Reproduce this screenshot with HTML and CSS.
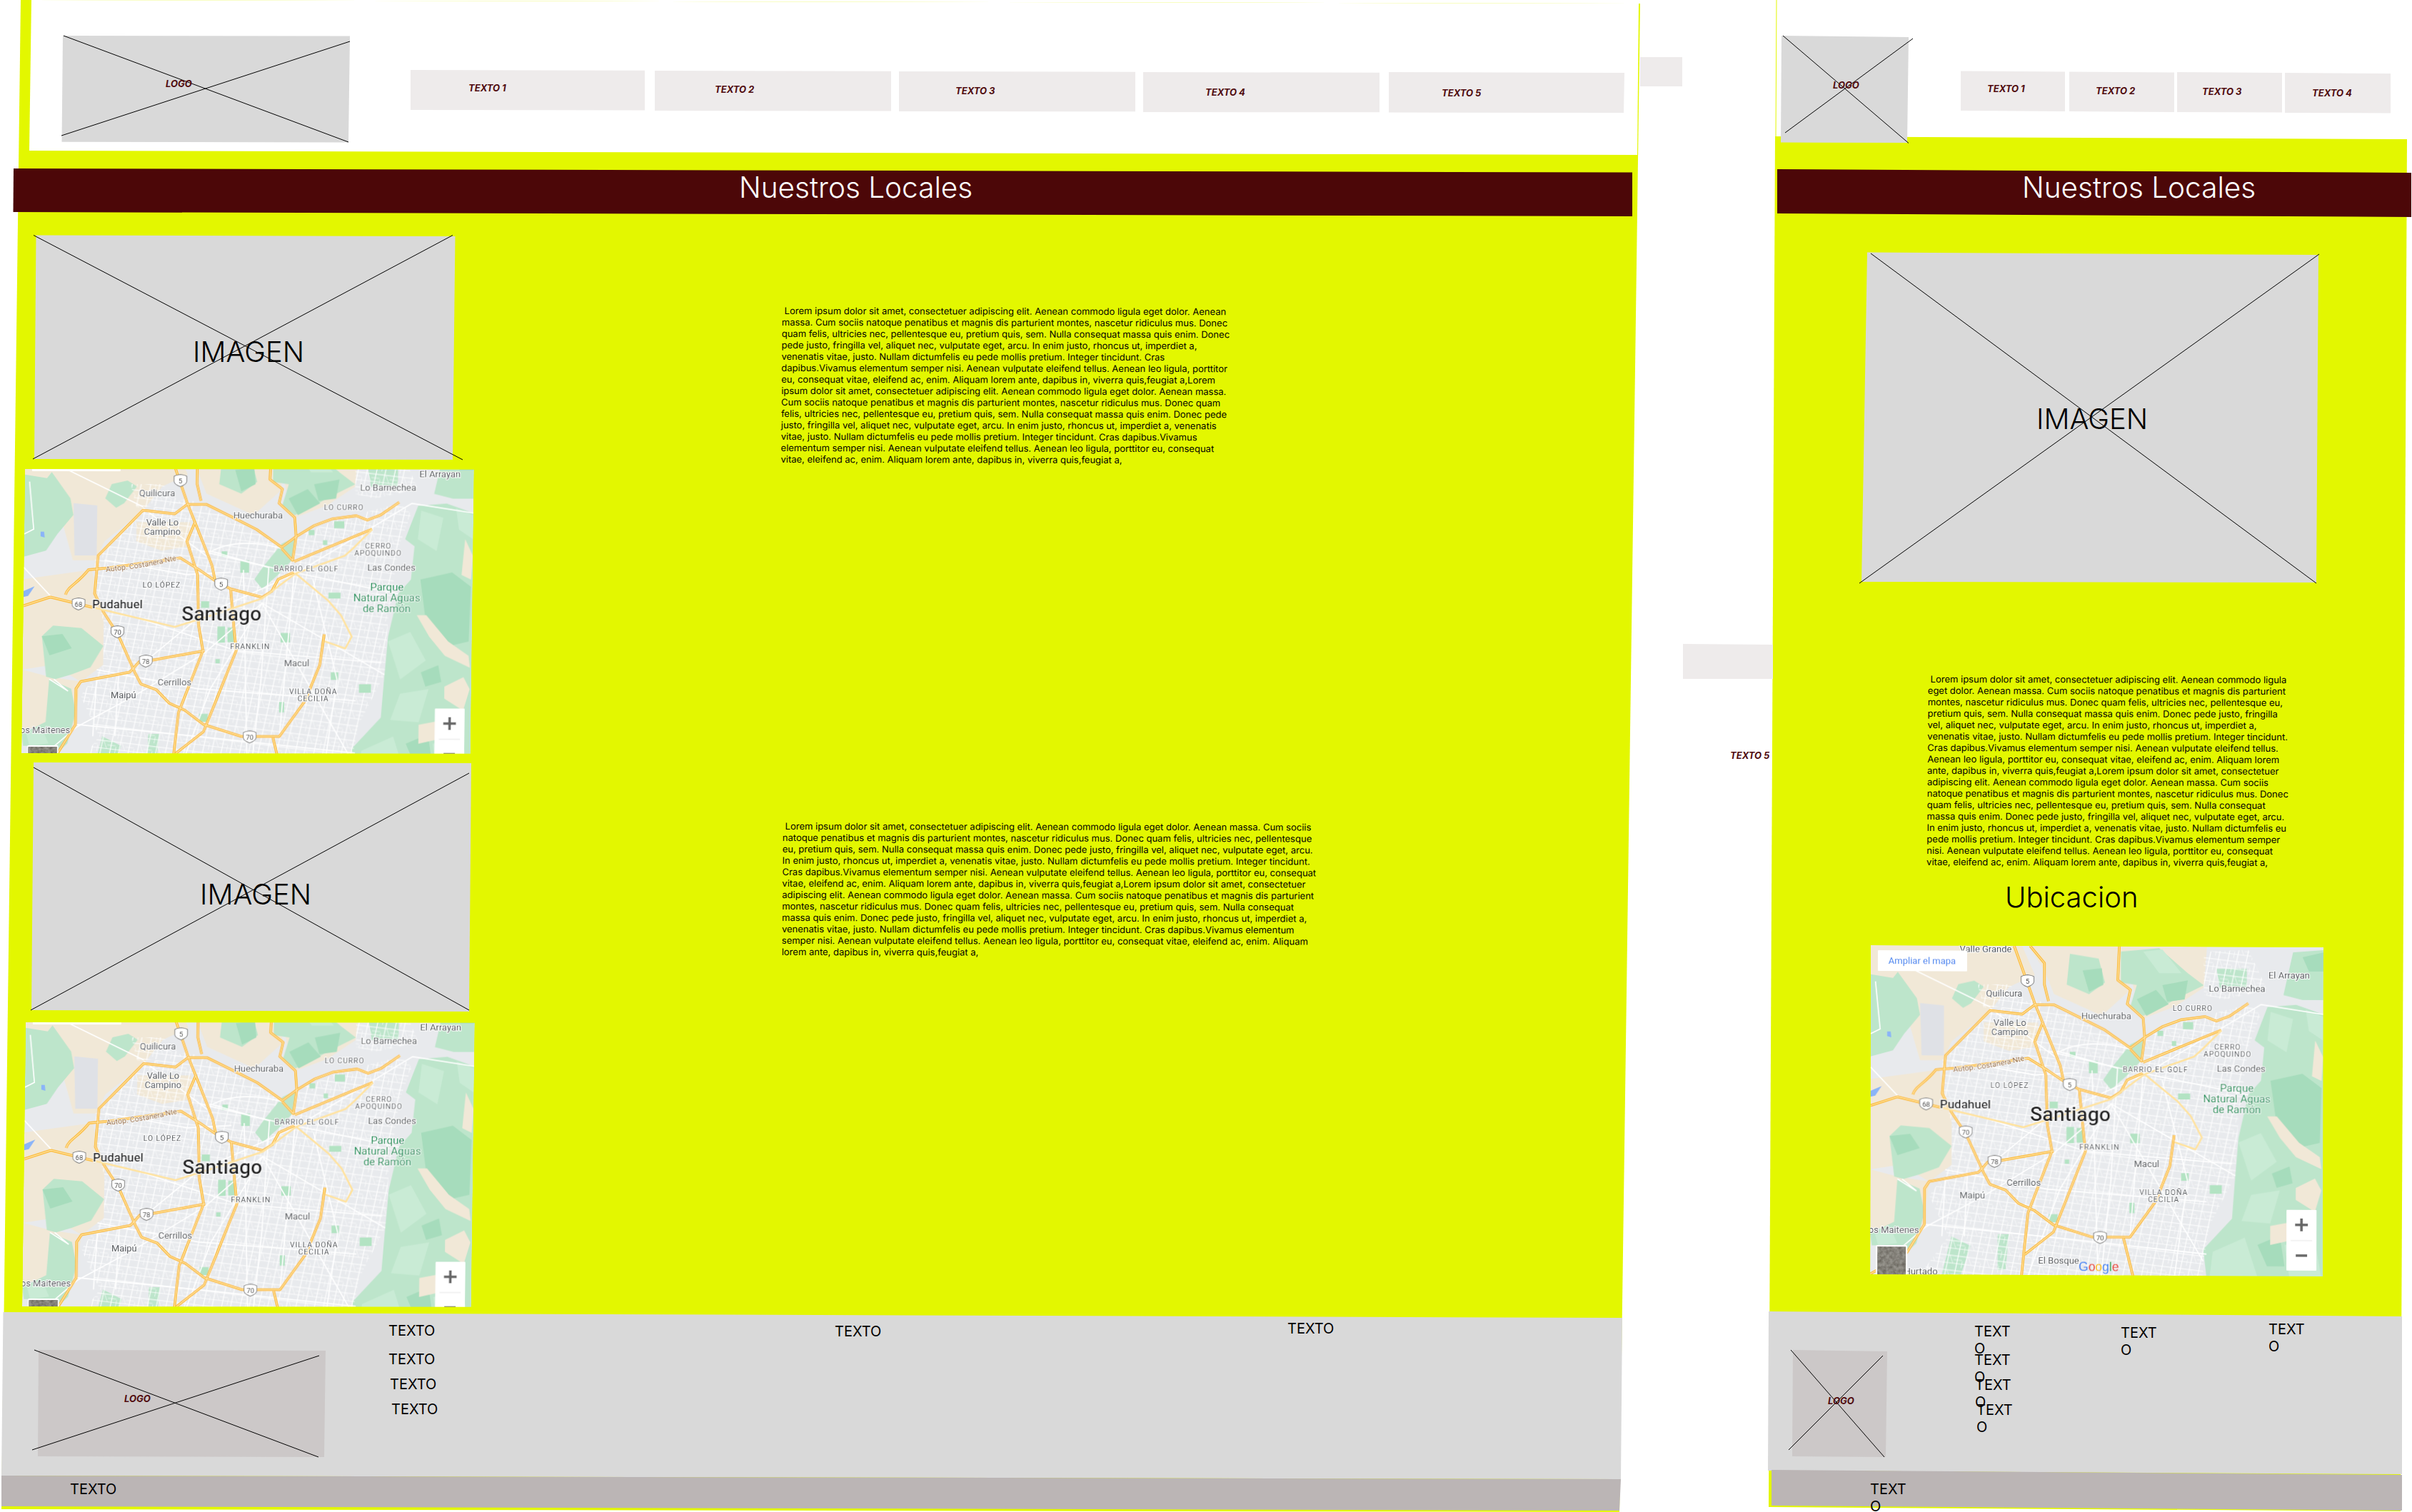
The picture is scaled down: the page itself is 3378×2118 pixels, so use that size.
FILE: index.html
```html
<!DOCTYPE html>
<html lang="es">
<head>
<meta charset="utf-8">
<title>Nuestros Locales</title>
<link rel="stylesheet" href="styles.css">
</head>
<body>
<main class="canvas">
<svg class="shapes" width="3378" height="2118" viewBox="0 0 3378 2118" xmlns="http://www.w3.org/2000/svg">
  <defs>
    <clipPath id="cropWide"><rect x="0" y="0" width="634" height="398"/></clipPath>
    <clipPath id="mapFrame"><rect x="0" y="0" width="634" height="461"/></clipPath>
    <pattern id="streets" width="58" height="62" patternUnits="userSpaceOnUse" patternTransform="rotate(9)">
      <path d="M0 14H58M0 46H58M12 0V62M40 0V62" stroke="#fff" stroke-width="2.6" fill="none"/>
      <path d="M0 30H26M28 62V34M44 14L58 46" stroke="#fff" stroke-width="1.6" fill="none"/>
    </pattern>
    <filter id="grain" x="0" y="0" width="100%" height="100%">
      <feTurbulence type="fractalNoise" baseFrequency=".22" numOctaves="3" seed="4"/>
      <feColorMatrix values="0 0 0 0 .30  0 0 0 0 .29  0 0 0 0 .26  1.6 0 0 0 -.1"/>
    </filter>
    <filter id="soft" x="0" y="0" width="100%" height="100%">
      <feGaussianBlur stdDeviation=".45"/>
    </filter>
    <g id="map" clip-path="url(#mapFrame)">
     <g filter="url(#soft)">
      <rect class="m-urban" width="634" height="461"/>
      <g transform="translate(-20.09 -26) scale(.4464 .3333)">
        <g class="m-beige">
          <path d="M45 78H520L560 200L480 250L420 350L300 480L270 560L200 560L130 240L45 230Z"/>
          <path d="M45 640L260 600L300 800L300 1000L230 1070L140 1000L45 1020Z"/>
          <path d="M45 1020L130 1050L230 1070L210 1250L45 1270Z"/>
          <path d="M540 78H830L860 260L770 370L620 280L590 180Z"/>
          <path d="M830 78H1100L1090 250L1000 330L900 380Z"/>
          <path d="M400 400L570 400L570 500L480 520L400 480Z"/>
        </g>
        <g class="m-green">
          <path d="M45 545V200L115 215L130 190L190 300L200 370L150 450L115 520Z"/>
          <path d="M300 300L320 240L370 225L400 250L360 320L335 340Z"/>
          <path d="M105 880L140 835L230 845L300 920L260 1010L200 1040L150 1060L120 1050Z"/>
          <path d="M130 1060L200 1100L215 1200L190 1330L160 1370L100 1340L50 1340L45 1290L120 1240Z"/>
          <path d="M670 110L760 130L780 230L730 280L660 240Z"/>
          <path d="M830 100L950 85L1040 190L1090 240L1000 300L950 340L900 370L860 330L880 240L830 230Z"/>
          <path d="M1130 170L1225 170L1225 250L1140 250Z"/>
          <path d="M1290 330L1380 320L1465 360V1465H1100L1090 1350L1180 1220L1190 1040L1200 880L1230 700L1270 640L1280 500L1250 470Z"/>
          <path d="M1370 100L1465 90V300H1400L1340 280Z"/>
          <path d="M300 1300L360 1340L330 1460H270Z"/>
          <path d="M445 1290L480 1290L470 1440H445Z"/>
        </g>
        <g class="m-light">
          <path d="M1300 350L1370 380L1350 520L1290 470Z"/>
          <path d="M1200 900L1270 860L1320 980L1240 1060Z"/>
          <path d="M1240 1120L1330 1100L1300 1240L1210 1230Z"/>
          <path d="M1120 1360L1220 1300L1260 1465H1110Z"/>
          <path d="M1345 1330L1440 1310L1460 1465H1360Z"/>
          <path d="M1410 340L1465 370V470L1420 430Z"/>
          <path d="M60 1290L110 1270L130 1330L70 1340Z"/>
          <path d="M900 100L960 90L1020 190L950 190Z"/>
        </g>
        <g class="m-dark">
          <path d="M1300 640L1400 610L1460 670L1455 900L1390 920L1320 830Z"/>
          <path d="M880 300L940 260L980 320L910 370Z"/>
          <path d="M1260 1330L1330 1290L1345 1420L1290 1420Z"/>
          <path d="M105 880L170 870L200 930L130 960Z"/>
          <path d="M1305 1030L1360 1000L1370 1070L1320 1090Z"/>
          <path d="M960 240L1040 220L1030 300L975 310Z"/>
          <path d="M1400 120L1465 100V180L1420 180Z"/>
          <path d="M710 180L770 170L775 240L730 270Z"/>
        </g>
        <g class="m-beige">
          <path d="M1440 470L1465 540L1460 640L1430 620Z"/>
          <path d="M1290 790L1320 790L1390 900L1455 960L1460 1010L1380 960L1330 880Z"/>
          <path d="M1380 1090L1440 1050L1460 1100L1440 1190L1380 1140Z"/>
          <path d="M1300 1250L1380 1230L1400 1300L1300 1330Z"/>
        </g>
        <path class="m-port" d="M200 320L275 330V540L205 540Z"/>
        <path class="m-water" d="M97 440H108L110 465L97 460Z"/>
        <path class="m-water" d="M45 690L80 670L60 710L45 715Z"/>
        <path class="m-grid" d="M270 560L285 530L420 350L560 300L720 400L860 500L905 460L1030 390L1230 320L1270 360L1230 500L1200 800L1190 1040L1110 1250L1090 1400V1465H200L290 1300L230 1130L300 1000L300 820L270 700Z"/>
        <path class="m-grid" d="M380 240L480 240L540 320L400 340Z"/>
        <path class="m-grid" d="M1090 100L1230 90L1290 260L1150 300L1090 280Z"/>
        <path class="m-green" d="M860 490L905 460L900 550L850 620L800 680L775 640L800 590Z"/>
        <g class="m-park">
          <rect x="660" y="838" width="24" height="68"/>
          <rect x="692" y="842" width="20" height="62"/>
          <rect x="860" y="865" width="30" height="40"/>
          <rect x="730" y="560" width="28" height="52"/>
          <rect x="607" y="732" width="26" height="28"/>
          <rect x="1010" y="695" width="38" height="25"/>
          <rect x="1020" y="1030" width="24" height="32"/>
          <rect x="605" y="1205" width="28" height="34"/>
          <rect x="1110" y="1080" width="38" height="36"/>
          <rect x="1025" y="395" width="32" height="30"/>
          <rect x="945" y="432" width="18" height="22"/>
          <rect x="990" y="475" width="14" height="20"/>
          <rect x="670" y="522" width="18" height="24"/>
          <rect x="858" y="1155" width="16" height="44"/>
          <rect x="655" y="975" width="14" height="18"/>
        </g>
        <g class="m-road">
          <path d="M45 590L130 710M180 180L420 335M60 230L75 430L45 450"/>
          <path d="M130 1060L190 1110L145 1060M45 1460L220 1260L400 1130L620 950L800 740"/>
          <path d="M420 1000L600 800L905 615L1270 320L1465 360"/>
          <path d="M280 1020L600 1100L1100 1150M400 800L720 940L1180 990M600 520L860 600L1230 700"/>
          <path d="M630 520L820 590L800 1060L770 1465M960 640L1040 1060L1000 1465M740 600L760 1465"/>
          <path d="M800 740L1190 1040M800 740L640 1100L540 1465M800 740L1090 1400M900 620L860 1300"/>
          <path d="M280 1060L270 1300M350 1030L340 1300M215 1250L600 1300L1100 1370"/>
          <path d="M640 520C700 480 780 480 860 510M420 340L640 560M300 560L560 620L700 610"/>
        </g>
        <g class="m-hwy">
          <path id="hwa" d="M560 325L520 365L420 350L280 540L270 700L300 780L345 870L400 1030L420 1080L470 1105L510 1160L560 1190L620 1250L740 1300L860 1300L940 1150L985 1000L998 870M560 325H620L720 390L780 430L860 505L905 460L960 415L1020 385L1095 372L1130 390L1170 370L1230 315"/>
          <path id="hwb" d="M495 78L560 320L640 580L650 640M545 78L590 150L590 240L603 310M585 400L560 480L595 620L600 830L615 940L540 1200L520 1465M700 680L715 880L720 940L620 1280L530 1375M825 78L820 220L860 260L850 320L900 380L905 460L895 560L860 510"/>
          <path id="hwc" d="M178 705C185 670 215 660 250 600L310 593L540 550L600 600L650 645L700 680L800 715L830 690L850 640L900 610M900 565L1145 428M45 752L130 715L270 760M620 940L455 980L415 985L385 1030L230 1070L215 1100L215 1250L160 1370L45 1460M840 1305L870 1465"/>
        </g>
        <g class="m-hwy-inner">
          <use href="#hwa"/><use href="#hwb"/><use href="#hwc"/>
        </g>
        <g class="m-ramp">
          <path d="M270 760L525 840L620 800L800 720L905 615L1060 540L1085 510L1145 430"/>
          <path d="M905 615L1010 730L1050 790L1085 880L1065 930L1000 900"/>
        </g>
      </g>
      <g class="m-label">
        <text x="161" y="9">Valle Grande</text>
        <text x="187" y="71">Quilicura</text>
        <text x="330" y="102">Huechuraba</text>
        <text x="513" y="63">Lo Barnechea</text>
        <text x="586" y="44">El Arrayan</text>
        <text x="195" y="112">Valle Lo</text>
        <text x="195" y="125">Campino</text>
        <text x="519" y="175">Las Condes</text>
        <text x="387" y="309">Macul</text>
        <text x="215" y="336">Cerrillos</text>
        <text x="143" y="354">Maipú</text>
        <text x="33" y="403">os Maitenes</text>
        <text x="264" y="445">El Bosque</text>
        <text x="71" y="461">Hurtado</text>
      </g>
      <g class="m-label m-caps">
        <text x="451" y="90">LO CURRO</text>
        <text x="500" y="144">CERRO</text>
        <text x="500" y="154">APOQUINDO</text>
        <text x="399" y="176">BARRIO EL GOLF</text>
        <text x="195" y="199">LO LÓPEZ</text>
        <text x="321" y="285">FRANKLIN</text>
        <text x="411" y="348">VILLA DOÑA</text>
        <text x="411" y="358">CECILIA</text>
      </g>
      <g class="m-label m-green-text">
        <text x="513" y="203">Parque</text>
        <text x="513" y="218">Natural Aguas</text>
        <text x="513" y="233">de Ramón</text>
      </g>
      <path id="costanera" class="m-none" d="M116 177Q170 172 218 160"/>
      <text class="m-road-name"><textPath href="#costanera">Autop. Costanera Nte.</textPath></text>
      <text class="m-pudahuel" x="133" y="228">Pudahuel</text>
      <text class="m-santiago" x="280" y="245">Santiago</text>
      <g class="m-shield">
        <g transform="translate(219.6 49)"><path d="M-9-6C-6-8-3-8 0-8.5C3-8 6-8 9-6V1C9 5 4 7 0 8.5C-4 7-9 5-9 1Z"/><text y="3.5">5</text></g>
        <g transform="translate(279 194)"><path d="M-9-6C-6-8-3-8 0-8.5C3-8 6-8 9-6V1C9 5 4 7 0 8.5C-4 7-9 5-9 1Z"/><text y="3.5">5</text></g>
        <g transform="translate(78 222)"><path d="M-9-6C-6-8-3-8 0-8.5C3-8 6-8 9-6V1C9 5 4 7 0 8.5C-4 7-9 5-9 1Z"/><text y="3.5">68</text></g>
        <g transform="translate(133.5 261)"><path d="M-9-6C-6-8-3-8 0-8.5C3-8 6-8 9-6V1C9 5 4 7 0 8.5C-4 7-9 5-9 1Z"/><text y="3.5">70</text></g>
        <g transform="translate(174 302)"><path d="M-9-6C-6-8-3-8 0-8.5C3-8 6-8 9-6V1C9 5 4 7 0 8.5C-4 7-9 5-9 1Z"/><text y="3.5">78</text></g>
        <g transform="translate(322 408)"><path d="M-9-6C-6-8-3-8 0-8.5C3-8 6-8 9-6V1C9 5 4 7 0 8.5C-4 7-9 5-9 1Z"/><text y="3.5">70</text></g>
      </g>
      <rect class="m-card" x="10" y="7" width="125" height="29" rx="1"/>
      <text class="m-expand" x="72" y="26">Ampliar el mapa</text>
      <rect class="m-card" x="583" y="368" width="42" height="85" rx="1"/>
      <path class="m-sep" d="M589 411H619"/>
      <path class="m-zoom" d="M604 380V398M595 389H613M596 432H612"/>
      <rect class="m-card" x="8" y="420" width="44" height="45" rx="2"/>
      <rect class="m-thumb" x="10" y="422" width="40" height="43"/>
      <rect x="10" y="422" width="40" height="43" filter="url(#grain)"/>
      <text class="m-google" x="292" y="455"><tspan class="g-b">G</tspan><tspan class="g-r">o</tspan><tspan class="g-y">o</tspan><tspan class="g-b">g</tspan><tspan class="g-g">l</tspan><tspan class="g-r">e</tspan></text>
     </g>
    </g>
  </defs>

  <!-- Desktop artboard -->
  <polygon class="c-yellow" points="29,0 2297,5 2268,2118 2,2114"/>
  <polygon class="c-white" points="44,0 2295,5 2293,217 41,211"/>
  <polygon class="c-grey" points="88,50 490,50.5 488,199.5 86.5,198.7"/>
  <polyline class="c-line" points="89,50 488,199"/>
  <polyline class="c-line" points="490,58 86,190"/>
  <polygon class="c-nav" points="575,98 903,98.7 903,154.5 575,154"/>
  <polygon class="c-nav" points="917,99 1248,99.7 1248,155.5 917,155"/>
  <polygon class="c-nav" points="1259,100 1590,100.7 1590,156.3 1259,156"/>
  <polygon class="c-nav" points="1601,101 1932,101.7 1932,157.3 1601,157"/>
  <polygon class="c-nav" points="1945,101 2275,102 2274,158 1945,157.5"/>
  <polygon class="c-nav" points="2297,80 2356,80 2356,121 2297,121"/>
  <polygon class="c-maroon" points="19,236 2286,241.5 2286,303 18.5,297"/>
  <polygon class="c-grey" points="50.5,329.5 637.5,331 634,644 48,643"/>
  <polyline class="c-line" points="47,329.5 648,644"/>
  <polyline class="c-line" points="634,329.5 46,643"/>
  <g transform="matrix(.992 .001 -.0126 1 35 657)"><g clip-path="url(#cropWide)"><use href="#map" y="-33"/></g></g>
  <polygon class="c-grey" points="47,1068 660,1069 657,1417 44,1415"/>
  <polyline class="c-line" points="47,1075 657,1415"/>
  <polyline class="c-line" points="657,1083 43,1415"/>
  <g transform="matrix(.992 .001 -.0126 1 36 1432)"><g clip-path="url(#cropWide)"><use href="#map" y="-33"/></g></g>
  <polygon class="c-grey" points="4.5,1838 2272,1846 2270,2072 2,2067"/>
  <polygon class="c-taupe" points="2,2067 2270,2072 2268,2116 2,2110"/>
  <polygon class="c-logo" points="54,1891 456,1892 454,2041 53,2040"/>
  <polyline class="c-line" points="48,1891 446,2041"/>
  <polyline class="c-line" points="447,1899 45,2031"/>

  <!-- Mobile artboard -->
  <polygon class="c-yellow" points="2486,191 3371,195 3362,2117 2477,2111"/>
  <polyline class="c-hair" points="2488,0 2487,191"/>
  <polygon class="c-grey" points="2495,50 2673,52 2671,200 2494,199.5"/>
  <polyline class="c-line" points="2497,50 2673,200.5"/>
  <polyline class="c-line" points="2679,54 2500,186"/>
  <polygon class="c-nav" points="2746,99.5 2892,100.5 2892,156 2746,155"/>
  <polygon class="c-nav" points="2898,100.5 3045,101.5 3045,157 2898,156"/>
  <polygon class="c-nav" points="3049,101 3196,102 3196,157.6 3049,157"/>
  <polygon class="c-nav" points="3200,102 3348,103 3348,158.5 3200,158"/>
  <polygon class="c-nav" points="2357,902 2483,903 2483,951 2357,951"/>
  <polygon class="c-maroon" points="2489,237 3377,242 3377,304 2489,299"/>
  <polygon class="c-grey" points="2615,353.6 3247,357 3244,816 2607,815"/>
  <polyline class="c-line" points="2620,355 3244,817"/>
  <polyline class="c-line" points="3248,356 2604,817"/>
  <g transform="matrix(1 .0047 -.002 1 2620 1324)"><use href="#map"/></g>
  <polygon class="c-grey" points="2477,1837 3364,1844 3364,2065 2476,2060"/>
  <polygon class="c-taupe" points="2481,2059 3364,2066 3364,2116 2481,2109"/>
  <polygon class="c-logo" points="2511,1891 2643,1893 2641,2041 2510,2040"/>
  <polyline class="c-line" points="2508,1891 2639,2041"/>
  <polyline class="c-line" points="2637,1899 2505,2031"/>
</svg>

<span class="tag d-logo">LOGO</span>
<span class="tag d-t1">TEXTO 1</span>
<span class="tag d-t2">TEXTO 2</span>
<span class="tag d-t3">TEXTO 3</span>
<span class="tag d-t4">TEXTO 4</span>
<span class="tag d-t5">TEXTO 5</span>
<h1 class="title d-title">Nuestros Locales</h1>
<span class="big d-img1">IMAGEN</span>
<span class="big d-img2">IMAGEN</span>
<p class="para d-p1">&nbsp;Lorem ipsum dolor sit amet, consectetuer adipiscing elit. Aenean commodo ligula eget dolor. Aenean<br>massa. Cum sociis natoque penatibus et magnis dis parturient montes, nascetur ridiculus mus. Donec<br>quam felis, ultricies nec, pellentesque eu, pretium quis, sem. Nulla consequat massa quis enim. Donec<br>pede justo, fringilla vel, aliquet nec, vulputate eget, arcu. In enim justo, rhoncus ut, imperdiet a,<br>venenatis vitae, justo. Nullam dictumfelis eu pede mollis pretium. Integer tincidunt. Cras<br>dapibus.Vivamus elementum semper nisi. Aenean vulputate eleifend tellus. Aenean leo ligula, porttitor<br>eu, consequat vitae, eleifend ac, enim. Aliquam lorem ante, dapibus in, viverra quis,feugiat a,Lorem<br>ipsum dolor sit amet, consectetuer adipiscing elit. Aenean commodo ligula eget dolor. Aenean massa.<br>Cum sociis natoque penatibus et magnis dis parturient montes, nascetur ridiculus mus. Donec quam<br>felis, ultricies nec, pellentesque eu, pretium quis, sem. Nulla consequat massa quis enim. Donec pede<br>justo, fringilla vel, aliquet nec, vulputate eget, arcu. In enim justo, rhoncus ut, imperdiet a, venenatis<br>vitae, justo. Nullam dictumfelis eu pede mollis pretium. Integer tincidunt. Cras dapibus.Vivamus<br>elementum semper nisi. Aenean vulputate eleifend tellus. Aenean leo ligula, porttitor eu, consequat<br>vitae, eleifend ac, enim. Aliquam lorem ante, dapibus in, viverra quis,feugiat a,</p>
<p class="para d-p2">&nbsp;Lorem ipsum dolor sit amet, consectetuer adipiscing elit. Aenean commodo ligula eget dolor. Aenean massa. Cum sociis<br>natoque penatibus et magnis dis parturient montes, nascetur ridiculus mus. Donec quam felis, ultricies nec, pellentesque<br>eu, pretium quis, sem. Nulla consequat massa quis enim. Donec pede justo, fringilla vel, aliquet nec, vulputate eget, arcu.<br>In enim justo, rhoncus ut, imperdiet a, venenatis vitae, justo. Nullam dictumfelis eu pede mollis pretium. Integer tincidunt.<br>Cras dapibus.Vivamus elementum semper nisi. Aenean vulputate eleifend tellus. Aenean leo ligula, porttitor eu, consequat<br>vitae, eleifend ac, enim. Aliquam lorem ante, dapibus in, viverra quis,feugiat a,Lorem ipsum dolor sit amet, consectetuer<br>adipiscing elit. Aenean commodo ligula eget dolor. Aenean massa. Cum sociis natoque penatibus et magnis dis parturient<br>montes, nascetur ridiculus mus. Donec quam felis, ultricies nec, pellentesque eu, pretium quis, sem. Nulla consequat<br>massa quis enim. Donec pede justo, fringilla vel, aliquet nec, vulputate eget, arcu. In enim justo, rhoncus ut, imperdiet a,<br>venenatis vitae, justo. Nullam dictumfelis eu pede mollis pretium. Integer tincidunt. Cras dapibus.Vivamus elementum<br>semper nisi. Aenean vulputate eleifend tellus. Aenean leo ligula, porttitor eu, consequat vitae, eleifend ac, enim. Aliquam<br>lorem ante, dapibus in, viverra quis,feugiat a,</p>
<span class="tag d-flogo">LOGO</span>
<span class="small d-f1">TEXTO</span>
<span class="small d-f2">TEXTO</span>
<span class="small d-f3">TEXTO</span>
<span class="small d-f4">TEXTO</span>
<span class="small d-f5">TEXTO</span>
<span class="small d-f6">TEXTO</span>
<span class="small d-f7">TEXTO</span>

<span class="tag m-logo">LOGO</span>
<span class="tag m-t1">TEXTO 1</span>
<span class="tag m-t2">TEXTO 2</span>
<span class="tag m-t3">TEXTO 3</span>
<span class="tag m-t4">TEXTO 4</span>
<span class="tag m-t5">TEXTO 5</span>
<h1 class="title m-title">Nuestros Locales</h1>
<span class="big m-img">IMAGEN</span>
<p class="para m-p">&nbsp;Lorem ipsum dolor sit amet, consectetuer adipiscing elit. Aenean commodo ligula<br>eget dolor. Aenean massa. Cum sociis natoque penatibus et magnis dis parturient<br>montes, nascetur ridiculus mus. Donec quam felis, ultricies nec, pellentesque eu,<br>pretium quis, sem. Nulla consequat massa quis enim. Donec pede justo, fringilla<br>vel, aliquet nec, vulputate eget, arcu. In enim justo, rhoncus ut, imperdiet a,<br>venenatis vitae, justo. Nullam dictumfelis eu pede mollis pretium. Integer tincidunt.<br>Cras dapibus.Vivamus elementum semper nisi. Aenean vulputate eleifend tellus.<br>Aenean leo ligula, porttitor eu, consequat vitae, eleifend ac, enim. Aliquam lorem<br>ante, dapibus in, viverra quis,feugiat a,Lorem ipsum dolor sit amet, consectetuer<br>adipiscing elit. Aenean commodo ligula eget dolor. Aenean massa. Cum sociis<br>natoque penatibus et magnis dis parturient montes, nascetur ridiculus mus. Donec<br>quam felis, ultricies nec, pellentesque eu, pretium quis, sem. Nulla consequat<br>massa quis enim. Donec pede justo, fringilla vel, aliquet nec, vulputate eget, arcu.<br>In enim justo, rhoncus ut, imperdiet a, venenatis vitae, justo. Nullam dictumfelis eu<br>pede mollis pretium. Integer tincidunt. Cras dapibus.Vivamus elementum semper<br>nisi. Aenean vulputate eleifend tellus. Aenean leo ligula, porttitor eu, consequat<br>vitae, eleifend ac, enim. Aliquam lorem ante, dapibus in, viverra quis,feugiat a,</p>
<h2 class="big m-ubic">Ubicacion</h2>
<span class="tag m-flogo">LOGO</span>
<span class="small wrap m-f1">TEXTO</span>
<span class="small wrap m-f2">TEXTO</span>
<span class="small wrap m-f3">TEXTO</span>
<span class="small wrap m-f4">TEXTO</span>
<span class="small wrap m-f5">TEXTO</span>
<span class="small wrap m-f6">TEXTO</span>
<span class="small wrap m-f7">TEXTO</span>
</main>
</body>
</html>
```
FILE: styles.css
```css
html, body { margin: 0; padding: 0; background: #fff; }
body { overflow: hidden; }

.canvas {
  position: relative;
  width: 3378px;
  height: 2118px;
  overflow: hidden;
  font-family: Inter, "Liberation Sans", sans-serif;
  color: #000;
}
.shapes { position: absolute; left: 0; top: 0; display: block; }

/* wireframe shapes */
.c-yellow { fill: #e3f700; }
.c-white { fill: #fff; }
.c-grey { fill: #d9d9d9; }
.c-nav { fill: #eeebeb; }
.c-maroon { fill: #4c0708; }
.c-taupe { fill: #bbb5b5; }
.c-logo { fill: #ccc8c8; }
.c-line { fill: none; stroke: #000; stroke-width: 1; }
.c-hair { fill: none; stroke: #e3f700; stroke-width: 1; }

/* map */
.m-urban { fill: #e8eaed; }
.m-beige { fill: #f1e8d7; }
.m-green { fill: #bde5cb; }
.m-light { fill: #c9ebd5; }
.m-dark { fill: #a6dcbc; }
.m-port { fill: #dfe1e6; }
.m-water { fill: #8ab4f8; }
.m-grid { fill: url(#streets); }
.m-park { fill: #b3e3c3; }
.m-road { fill: none; stroke: #fff; stroke-width: 1.6; }
.m-road path { vector-effect: non-scaling-stroke; }
.m-hwy { fill: none; stroke: #fbbd3f; stroke-width: 3.8; stroke-linejoin: round; }
.m-hwy path { vector-effect: non-scaling-stroke; }
.m-hwy-inner { fill: none; stroke: #ffe9b4; stroke-width: 1; stroke-linejoin: round; }
.m-ramp { fill: none; stroke: #ffe3a0; stroke-width: 2.6; stroke-linejoin: round; }
.m-ramp path { vector-effect: non-scaling-stroke; }
.m-none { fill: none; stroke: none; }
.m-label text {
  font: 400 13px Roboto, sans-serif;
  fill: #4f5358;
  stroke: #fff;
  stroke-width: 2px;
  paint-order: stroke;
  text-anchor: middle;
}
.m-caps text { font-size: 10.5px; letter-spacing: .9px; }
.m-green-text text { font-size: 15px; fill: #1f8f5a; stroke-width: 1.5px; }
.m-road-name { font: 400 10.6px Roboto, sans-serif; fill: #8a5a28; stroke: #fff; stroke-width: 1.5px; paint-order: stroke; }
.m-pudahuel { font: 500 17px Roboto, sans-serif; fill: #202124; stroke: #fff; stroke-width: 2px; paint-order: stroke; text-anchor: middle; }
.m-santiago { font: 500 28.5px Roboto, sans-serif; fill: #202124; stroke: #fff; stroke-width: 2px; paint-order: stroke; text-anchor: middle; }
.m-shield path { fill: #fff; stroke: #7c7c7c; stroke-width: 1; }
.m-shield text { font: 400 9.5px Roboto, sans-serif; fill: #333; text-anchor: middle; }
.m-card { fill: #fff; }
.m-expand { font: 400 13px Roboto, sans-serif; fill: #4a86f0; text-anchor: middle; }
.m-sep { fill: none; stroke: #e6e6e6; stroke-width: 1; }
.m-zoom { fill: none; stroke: #666; stroke-width: 3.6; }
.m-thumb { fill: #5f5b53; }
.m-google { font: 400 17.5px "Liberation Sans", sans-serif; }
.g-b { fill: #4285f4; }
.g-r { fill: #ea4335; }
.g-y { fill: #fbbc05; }
.g-g { fill: #34a853; }

/* text on the canvas */
.tag, .small, .big, .title, .para { position: absolute; margin: 0; white-space: nowrap; }
.tag { font: italic 700 13px/16px Inter, sans-serif; color: #4f0a0e; }
.small { font: 400 20px/24px Inter, sans-serif; }
.wrap { width: 52px; white-space: normal; word-break: break-all; }
.big { font: 350 40px/48px Inter, sans-serif; }
.title { font: 300 40.5px/50px Inter, sans-serif; color: #fff; }
.para { font: 400 13px/16px Inter, sans-serif; transform: matrix(1, .002, -.007, 1, 0, 0); transform-origin: 0 0; }

.d-logo { left: 232px; top: 109px; }
.d-t1 { left: 656px; top: 115px; }
.d-t2 { left: 1001px; top: 117px; }
.d-t3 { left: 1338px; top: 119px; }
.d-t4 { left: 1688px; top: 121px; }
.d-t5 { left: 2019px; top: 122px; }
.d-title { left: 1035px; top: 238px; }
.d-img1 { left: 270px; top: 469px; }
.d-img2 { left: 280px; top: 1229px; }
.d-p1 { left: 1095px; top: 427px; }
.d-p2 { left: 1096px; top: 1149px; }
.d-flogo { left: 174px; top: 1951px; }
.d-f1 { left: 544px; top: 1852px; }
.d-f2 { left: 544px; top: 1892px; }
.d-f3 { left: 546px; top: 1927px; }
.d-f4 { left: 548px; top: 1962px; }
.d-f5 { left: 1169px; top: 1853px; }
.d-f6 { left: 1803px; top: 1849px; }
.d-f7 { left: 98px; top: 2074px; }

.m-logo { left: 2567px; top: 111px; }
.m-t1 { left: 2783px; top: 116px; }
.m-t2 { left: 2935px; top: 119px; }
.m-t3 { left: 3084px; top: 120px; }
.m-t4 { left: 3238px; top: 122px; }
.m-t5 { left: 2423px; top: 1050px; }
.m-title { left: 2832px; top: 238px; }
.m-img { left: 2852px; top: 563px; }
.m-p { left: 2700px; top: 943px; }
.m-ubic { left: 2808px; top: 1233px; }
.m-flogo { left: 2560px; top: 1954px; }
.m-f1 { left: 2765px; top: 1853px; }
.m-f2 { left: 2765px; top: 1893px; }
.m-f3 { left: 2766px; top: 1928px; }
.m-f4 { left: 2768px; top: 1963px; }
.m-f5 { left: 2970px; top: 1855px; }
.m-f6 { left: 3177px; top: 1850px; }
.m-f7 { left: 2619px; top: 2074px; }
```
